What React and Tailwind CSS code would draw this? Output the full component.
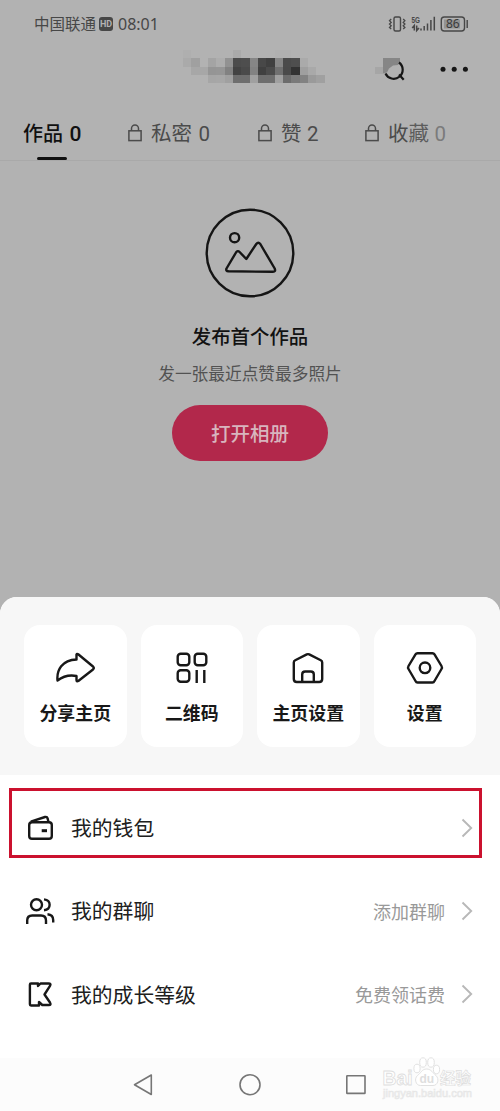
const LEVELS = [
  ["#afafaf", "", "", "", "", "", "#aaaaaa", "", "", "", "", "#b0b0b0", "#b0b0b0"],
  ["#aaaaaa", "#a0a0a0", "", "#a4a4a4", "#adadad", "#929292", "#4c4c4c", "#4e4e4e", "#868686", "#484848", "#404040", "#868686", "#4b4b4b", "#4e4e4e", "#aaaaaa"],
  ["", "#a7a7a7", "#a7a7a7", "#959595", "#969696", "#828282", "#434343", "#4a4a4a", "#828282", "#404040", "#4b4b4b", "#707070", "#4a4a4a", "#323232", "#9f9f9f", "#a9a9a9"],
  ["", "", "", "#a6a6a6", "#a7a7a7", "#a0a0a0", "#6e6e6e", "#6e6e6e", "#a0a0a0", "#6e6e6e", "#6e6e6e", "#a0a0a0", "#6c6c6c", "#7a7a7a", "#828282", "#9a9a9a", "#a0a0a0"],
];

function StatusBar() {
  return (
    <div className="flex h-12 items-center pr-[32px] pl-[34px] text-[#474747]">
      <span className="text-[15.5px]">中国联通</span>
      <span className="ml-[3px] flex h-[14px] w-[14px] items-center justify-center rounded-[3px] bg-[#474747] font-['Roboto'] text-[9px] leading-[14px] font-bold text-[#b2b2b2]">
        HD
      </span>
      <span className="ml-[5px] font-['Noto_Sans'] text-[16px]">08:01</span>
      <svg className="ml-auto" width="80" height="18" viewBox="0 0 80 18" fill="none" stroke="#474747" strokeWidth="1.4">
        <rect x="6" y="2" width="6.5" height="14" rx="1.5" />
        <path d="M3.2 4 1.5 5.7 3.2 7.400 1.500 9.100 3.200 10.800 1.500 12.500 3.200 14M15.200 4 16.900 5.700 15.200 7.400 16.900 9.100 15.200 10.800 16.900 12.500 15.200 14" strokeWidth="1.300" />
        <text x="23.500" y="8" fontSize="8.500" fontWeight="bold" fill="#474747" stroke="none" fontFamily="Liberation Sans" textLength="8.500" lengthAdjust="spacingAndGlyphs">
          5G
        </text>
        <path d="M26.300 15.500V10.500L24.200 13M28.700 10.500V15.500L31 13M33 15.500V13.500M36.200 15.500V11M39.500 15.500V8.500M42.900 15.500V5M46.300 15.500V1.700" strokeWidth="1.500" />
        <rect x="53.300" y="2" width="23.200" height="14" rx="3" />
        <rect x="56" y="4.500" width="16" height="9" fill="#939393" stroke="none" />
        <path d="M79.200 5V13" strokeWidth="1.400" />
        <text x="64.800" y="13.200" textAnchor="middle" fontSize="12" fill="#3a3a3a" stroke="none" fontFamily="Noto Sans">
          86
        </text>
      </svg>
    </div>
  );
}

function Header() {
  return (
    <div className="flex h-[42px] items-center pr-[31px] pl-[183px]">
      <svg width="142" height="42" viewBox="0 0 142 42" shapeRendering="crispEdges">
        {LEVELS.map((row, y) =>
          row.map((fill, x) =>
            fill ? <rect key={`${y}-${x}`} x={x * 8.33} y={2 + y * 8.33} width="8.34" height="8.34" fill={fill} /> : null
          )
        )}
      </svg>
      <svg className="ml-[50px]" width="30" height="42" viewBox="0 0 30 42" fill="none">
        <path d="M0 19h8v7H0z" fill="#a6a6a6" />
        <path d="M8 10h17v4l-2 3-5 .5-4 3-2 4-4 1z" fill="#868686" />
        <path d="M24 14.500A9 9 0 1 1 10.500 25.500M24 26.500 28.700 31.700" stroke="#161616" strokeWidth="2.200" />
      </svg>
      <svg className="ml-auto" width="29" height="6" viewBox="0 0 29 6" fill="#161616">
        <circle cx="3" cy="3.300" r="2.500" />
        <circle cx="14.200" cy="3.300" r="2.500" />
        <circle cx="25.400" cy="3.300" r="2.500" />
      </svg>
    </div>
  );
}

function Lock() {
  return (
    <svg width="14" height="18" viewBox="0 0 14 18" fill="none" stroke="currentColor" strokeWidth="1.500">
      <rect x="0.900" y="6.800" width="12.200" height="9.800" />
      <path d="M3.500 7V4.500a3.500 3.500 0 0 1 7 0V7" />
    </svg>
  );
}

function Tabs() {
  return (
    <div className="flex h-[71px] border-b border-[#a9a9a9] pt-[28px] pl-[23px] text-[20.5px] leading-[30px] text-[#4b4b4b]">
      <div className="flex w-[105px] flex-col text-[#101010]">
        <span className="text-[20px] font-medium">
          作品 <span className="ml-[2px] font-['Roboto'] text-[21px]">0</span>
        </span>
        <span className="mt-[8px] ml-[14px] h-[3px] w-[30px] rounded-full bg-[#101010]" />
      </div>
      <div className="flex h-[30px] w-[130px] items-center gap-[9px]">
        <Lock />
        <span className="whitespace-nowrap">私密 <span className="ml-[2px] font-['Roboto']">0</span></span>
      </div>
      <div className="flex h-[30px] w-[107px] items-center gap-[9px]">
        <Lock />
        <span className="whitespace-nowrap">赞 <span className="ml-px font-['Roboto']">2</span></span>
      </div>
      <div className="flex h-[30px] items-center gap-[9px]">
        <Lock />
        <span className="whitespace-nowrap">
          收<span className="text-[#5c5c5c]">藏</span> <span className="ml-px font-['Roboto'] text-[#7b7b7b]">0</span>
        </span>
      </div>
    </div>
  );
}

function EmptyState() {
  return (
    <div className="flex flex-col items-center pt-[47px]">
      <svg width="90" height="90" viewBox="0 0 90 90" fill="none" stroke="#151515" strokeWidth="2.400" strokeLinejoin="round">
        <circle cx="45" cy="45" r="43.300" />
        <circle cx="29.600" cy="29.700" r="4.600" />
        <path d="M21.500 60.500 31 44.500Q32.700 42 34.600 44L41.300 51 51.300 36Q53.300 33.500 55.300 36L69.700 60.500Q71 63.800 68 63.800L23.500 63.300Q20.500 63 21.500 60.500Z" />
      </svg>
      <h2 className="mt-[22px] text-[19.400px] leading-[32px] font-medium text-[#121212]">发布首个作品</h2>
      <p className="mt-[8px] text-[16.700px] leading-[26px] text-[#525252]">发一张最近点赞最多照片</p>
      <button className="mt-[19px] flex h-[56px] w-[156px] items-center justify-center rounded-full bg-[#b2284b] text-[19.500px] font-medium text-[#d8b5be]">
        打开相册
      </button>
    </div>
  );
}

const actions = [
  {
    label: "分享主页",
    icon: <path d="M21.500 5.500Q22 4.500 23.200 5.300L38 17.500Q39.500 19 38 20.500L23.300 32Q21.500 33 21.500 31V27Q11 25 2.500 31.500C1.500 21 7 11 21.500 10.500Z" />,
  },
  {
    label: "二维码",
    icon: (
      <>
        <rect x="5.700" y="4.700" width="11.600" height="11.600" rx="3" />
        <rect x="22.700" y="4.700" width="11.600" height="11.600" rx="3" />
        <rect x="5.700" y="21.200" width="11.600" height="11.600" rx="3" />
        <path d="M24.700 21V34M32.300 21V34" />
      </>
    ),
  },
  {
    label: "主页设置",
    icon: (
      <path d="M5.800 13.500Q5.800 12 7.200 11.300L18.800 5.400Q20 4.900 21.200 5.400L32.800 11.300Q34.200 12 34.200 13.500V30Q34.200 33 31.200 33H8.800Q5.800 33 5.800 30ZM14.200 33V25.500Q14.200 22.500 17.200 22.500H22.800Q25.800 22.500 25.800 25.500V33" />
    ),
  },
  {
    label: "设置",
    icon: (
      <>
        <path d="M12.500 4.200H27.500Q28.800 4.200 29.500 5.400L36.500 17Q37.400 18.500 36.500 20L29.500 32Q28.800 33.500 27.500 33.500H12.500Q11.200 33.500 10.500 32L3.500 20Q2.600 18.500 3.500 17L10.500 5.400Q11.200 4.200 12.500 4.200Z" />
        <circle cx="20" cy="18.800" r="5.300" />
      </>
    ),
  },
];

const rows = [
  {
    label: "我的钱包",
    icon: (
      <>
        <rect x="4.200" y="9.200" width="22.600" height="16.600" rx="2.800" />
        <path d="M5.800 8.700 20 4Q22 3.400 22.600 5.400L23.500 9" />
        <path d="M16.700 17.700H22" strokeWidth="3" />
      </>
    ),
  },
  {
    label: "我的群聊",
    hint: "添加群聊",
    icon: (
      <>
        <circle cx="11.500" cy="8.800" r="5.500" />
        <path d="M19 3.400C26.500 4.200 26.500 13.500 19 14.300M2.200 28V24.500Q2.200 19.500 7.200 19.500H16Q21 19.500 21 24.500V28M22.500 18.200Q28.200 18.700 28.200 24V26.500" />
      </>
    ),
  },
  {
    label: "我的成长等级",
    hint: "免费领话费",
    icon: (
      <path d="M6 4.500H13V7L15.500 4.500H23.500Q26.500 4.500 25 6.800L19.500 15.500 25 23.500Q26.500 26 23.800 26H17.300L14 23V26.500H6Q4.900 26.500 4.900 25.300V5.700Q4.900 4.500 6 4.500Z" />
    ),
  },
];

function Sheet() {
  return (
    <div className="flex-1 overflow-hidden rounded-t-[17px] bg-white">
      <div className="flex h-[178px] gap-[14px] bg-[#f7f7f7] px-[24px] pt-[28px]">
        {actions.map((a) => (
          <div key={a.label} className="flex h-[122px] flex-1 flex-col items-center rounded-[16px] bg-white pt-[24px]">
            <svg width="40" height="40" viewBox="0 0 40 40" fill="none" stroke="#181818" strokeWidth="2.400" strokeLinejoin="round">
              {a.icon}
            </svg>
            <span className="mt-[9px] text-[17.900px] leading-[28px] font-bold text-[#181818]">{a.label}</span>
          </div>
        ))}
      </div>
      <div className="flex flex-col pt-[11px]">
        {rows.map((r) => (
          <div key={r.label} className="flex h-[83.400px] items-center pr-[27px] pl-[25px]">
            <svg width="30" height="30" viewBox="0 0 30 30" fill="none" stroke="#181818" strokeWidth="2.400" strokeLinejoin="round">
              {r.icon}
            </svg>
            <span className="ml-[16px] text-[20.800px] text-[#202020]">{r.label}</span>
            <span className="ml-auto text-[18px] text-[#999]">{r.hint}</span>
            <svg className="ml-[16px]" width="12" height="20" viewBox="0 0 12 20" fill="none" stroke="#b8b8b8" strokeWidth="1.900">
              <path d="M1.500 1.500 10.200 10 1.500 18.500" />
            </svg>
          </div>
        ))}
      </div>
    </div>
  );
}

function NavBar() {
  return (
    <div className="flex h-[53px] items-center bg-[#fcfcfc] pl-[133px]">
      <svg width="234" height="26" viewBox="0 0 234 26" fill="none" stroke="#767676" strokeWidth="1.600" strokeLinejoin="round">
        <path d="M18.300 3V22.500L1.500 12.700Z" />
        <circle cx="117" cy="12.700" r="10" />
        <rect x="213.800" y="3.700" width="18.200" height="17.700" rx="0.500" />
      </svg>
    </div>
  );
}

function Watermark() {
  return (
    <svg className="absolute top-[1054px] left-[380px]" width="100" height="50" viewBox="0 0 100 50" fill="#fff" stroke="#dedede" strokeWidth="0.900">
      <text x="2.500" y="31" fontSize="21" fontWeight="bold" fontFamily="Liberation Sans" textLength="30" lengthAdjust="spacingAndGlyphs">
        Bai
      </text>
      <ellipse cx="37" cy="14.500" rx="3.100" ry="4.300" />
      <ellipse cx="43" cy="8.500" rx="3.300" ry="4.700" />
      <ellipse cx="51" cy="8.500" rx="3.300" ry="4.700" />
      <ellipse cx="56.500" cy="15.500" rx="3.100" ry="4.300" />
      <path d="M46.500 15C42 15 41 19 37.500 21.500C34 24.500 35.500 31.500 40.500 31.500H53C58 31.500 59.500 25 56 21.500C52.500 19 51.500 15 46.500 15Z" />
      <text x="39.500" y="29" fontSize="12" fontWeight="bold" fontFamily="Liberation Sans" fill="#dedede" stroke="none">
        du
      </text>
      <text x="60" y="29.500" fontSize="15.500" fontWeight="bold" fontFamily="Noto Sans CJK SC" strokeWidth="0.700">
        经验
      </text>
      <text x="3" y="43" fontSize="10.500" fill="#f6f6f6" stroke="#e6e6e6" strokeWidth="0.600" fontFamily="Liberation Sans" textLength="89" lengthAdjust="spacingAndGlyphs">
        jingyan.baidu.com
      </text>
    </svg>
  );
}

export default function App() {
  return (
    <div className="relative flex h-[1111px] w-[500px] flex-col overflow-hidden bg-[#b2b2b2] font-['Noto_Sans_CJK_SC',sans-serif]">
      <div className="h-[597px]">
        <StatusBar />
        <Header />
        <Tabs />
        <EmptyState />
      </div>
      <Sheet />
      <NavBar />

      {/* Wallet highlight */}
      <div className="absolute top-[788px] left-[9px] h-[70px] w-[473px] border-3 border-[#cb112e]" />
      <Watermark />
    </div>
  );
}
